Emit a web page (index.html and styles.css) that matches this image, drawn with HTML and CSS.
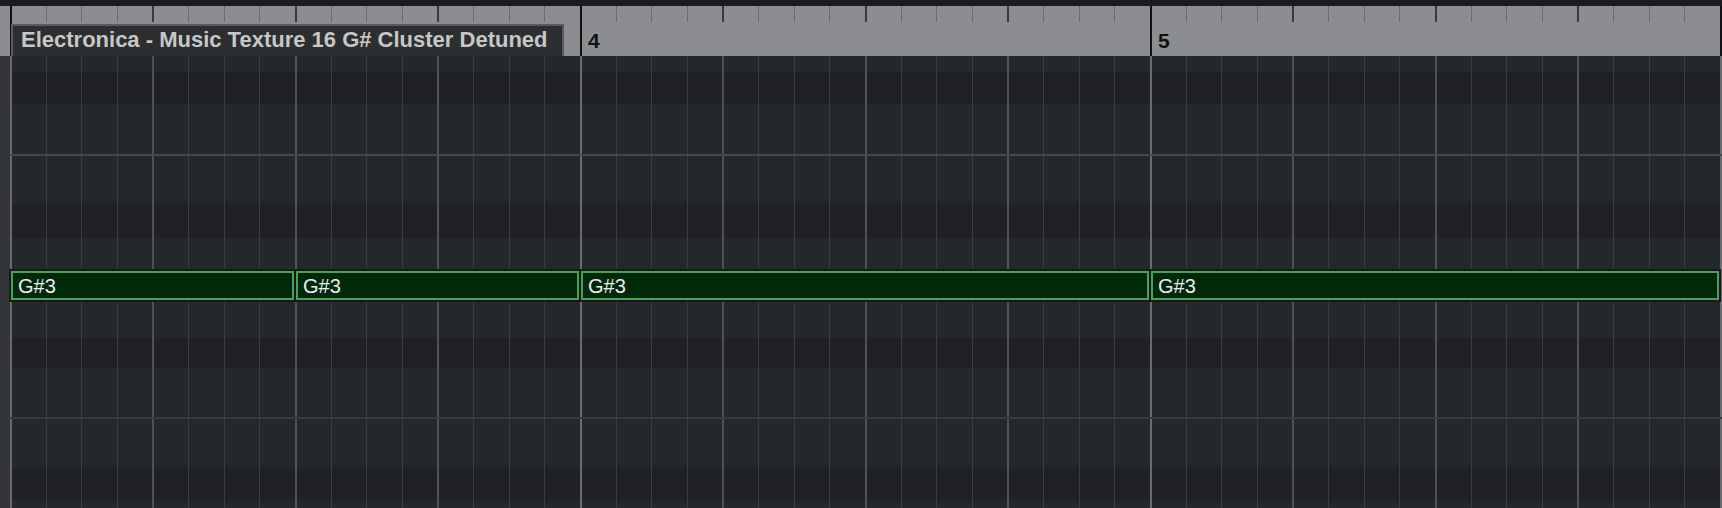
FILE: index.html
```html
<!DOCTYPE html>
<html>
<head>
<meta charset="utf-8">
<link rel="stylesheet" href="styles.css">
</head>
<body>
<div class="app">
  <div class="topbar"></div>
  <div class="ruler">
    <div class="ruler-pad"></div>
    <div class="ruler-track">
      <div class="bar">
        <div class="clip-name">Electronica - Music Texture 16 G# Cluster Detuned</div>
      </div>
      <div class="bar"><span class="bar-num">4</span></div>
      <div class="bar"><span class="bar-num">5</span></div>
      <div class="bar end"></div>
    </div>
  </div>
  <div class="grid">
    <div class="strip"></div>
    <div class="roll">
      <div class="band light h16"></div>
      <div class="band dark h32"></div>
      <div class="band light h50"></div>
      <div class="hline strong"></div>
      <div class="band light h48"></div>
      <div class="band dark h34"></div>
      <div class="band light h31"></div>
      <div class="band light noterow">
        <div class="note half">G#3</div>
        <div class="note half">G#3</div>
        <div class="note whole">G#3</div>
        <div class="note whole">G#3</div>
      </div>
      <div class="band light h36"></div>
      <div class="band dark h30"></div>
      <div class="band light h49"></div>
      <div class="hline faint"></div>
      <div class="band light h49"></div>
      <div class="band dark h32"></div>
      <div class="band light h8"></div>
    </div>
  </div>
</div>
</body>
</html>
```
FILE: styles.css
```css
* { box-sizing: border-box; margin: 0; padding: 0; }
html, body {
  width: 1722px;
  height: 508px;
  overflow: hidden;
  background: #1b1c1e;
  font-family: "Liberation Sans", Arial, sans-serif;
}
.app {
  display: flex;
  flex-direction: column;
  height: 508px;
}
.topbar {
  height: 6px;
  flex: none;
  background: #1b1c1e;
}
.ruler {
  height: 50px;
  flex: none;
  display: flex;
  background: #8c8d91;
}
.ruler-pad {
  width: 10px;
  flex: none;
}
.ruler-track {
  flex: 1;
  display: grid;
  grid-template-columns: 570px 570px 570px 2px;
  background-image:
    repeating-linear-gradient(to right, #111214 0 2px, transparent 2px 570px),
    repeating-linear-gradient(to right, #393a3d 0 2px, transparent 2px 142.5px),
    repeating-linear-gradient(to right, #6c6d71 0 1px, transparent 1px 35.625px);
  background-size: 100% 100%, 100% 16px, 100% 16px;
  background-repeat: no-repeat;
}
.bar {
  display: flex;
  align-items: flex-end;
}
.bar-num {
  font-weight: 700;
  font-size: 21px;
  line-height: 21px;
  color: #111;
  padding: 0 0 5px 8px;
}
.clip-name {
  margin-left: 1px;
  width: 553px;
  height: 32px;
  background: #2d2e30;
  border: 2px solid #5a5b5e;
  border-bottom: none;
  color: #c6c7c9;
  font-weight: 700;
  font-size: 22px;
  line-height: 28px;
  padding-left: 8px;
  white-space: nowrap;
  overflow: hidden;
}
.grid {
  flex: 1;
  display: flex;
}
.strip {
  width: 10px;
  flex: none;
  background: #343538;
}
.roll {
  flex: 1;
  display: flex;
  flex-direction: column;
}
.band {
  flex: none;
  background-image:
    repeating-linear-gradient(to right, #6a6b6f 0 2px, transparent 2px 570px),
    repeating-linear-gradient(to right, #505155 0 2px, transparent 2px 142.5px),
    repeating-linear-gradient(to right, #3a3c3f 0 1px, transparent 1px 35.625px);
}
.light { background-color: #25282b; }
.dark { background-color: #202124; }
.hline { height: 2px; flex: none; }
.hline.strong { background: #47484c; }
.hline.faint { background: #393a3e; }
.h8 { height: 8px; }
.h16 { height: 16px; }
.h30 { height: 30px; }
.h31 { height: 31px; }
.h32 { height: 32px; }
.h34 { height: 34px; }
.h36 { height: 36px; }
.h48 { height: 48px; }
.h49 { height: 49px; }
.h50 { height: 50px; }
.noterow {
  height: 33px;
  display: flex;
}
.note {
  flex: none;
  margin: 2px 1px;
  border: 2px solid #4f9d5b;
  background: #00290c;
  box-shadow: 0 0 0 2px #161a18;
  color: #ececec;
  font-size: 20px;
  line-height: 24px;
  padding: 1px 0 0 5px;
  white-space: nowrap;
  overflow: hidden;
}
.note.half { width: 283px; }
.note.whole { width: 568px; }
```
